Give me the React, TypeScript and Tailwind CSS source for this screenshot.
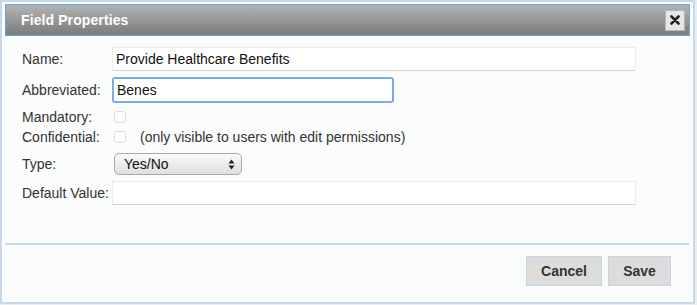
import { useState } from "react";

export default function App() {
  const [name, setName] = useState("Provide Healthcare Benefits");
  const [abbr, setAbbr] = useState("Benes");
  const [defaultValue, setDefaultValue] = useState("");

  return (
    <div className="w-[697px] h-[305px] bg-[#e9eef2] font-['Liberation_Sans',Arial,sans-serif] text-[14px] text-[#333]">
      <div className="w-[695px] h-[304px] border-2 border-[#c6d9e8] bg-[#fbfcfc] px-[3px] pt-[2px] flex flex-col">
        {/* Title bar */}
        <div className="h-[32px] border border-[#65a5de] bg-gradient-to-b from-[#b4b4b4] to-[#7b7b7b] flex items-center justify-between pl-[15px] pr-[4px]">
          <span className="text-white font-bold text-[14px] tracking-[0.1px]">Field Properties</span>
          <button className="w-[20px] h-[21px] bg-[#e6e6e6] border border-[#b5b5b5] flex items-center justify-center">
            <svg width="10" height="10" viewBox="0 0 10 10">
              <path d="M1.5 1.5 L8.5 8.5 M8.5 1.5 L1.5 8.5" stroke="#222" strokeWidth="2.6" strokeLinecap="round" />
            </svg>
          </button>
        </div>

        {/* Body */}
        <div className="h-[207px] pl-[17px] pt-[11px] flex flex-col">
          <div className="flex items-center h-[24px]">
            <label className="w-[90px]">Name:</label>
            <input
              value={name}
              onChange={(e) => setName(e.target.value)}
              className="w-[524px] h-[24px] bg-white border border-[#ebebeb] border-b-[#d6d6d6] px-[3px] outline-none text-[#111]"
            />
          </div>
          <div className="flex items-center h-[26px] mt-[6px]">
            <label className="w-[90px]">Abbreviated:</label>
            <input
              value={abbr}
              onChange={(e) => setAbbr(e.target.value)}
              className="w-[282px] h-[26px] bg-white border-2 border-[#7eaae3] rounded-[3px] px-[3px] outline-none text-[#111]"
            />
          </div>
          <div className="flex items-center h-[20px] mt-[4px]">
            <label className="w-[92px]">Mandatory:</label>
            <span className="w-[12px] h-[12px] border border-[#dcdcdc] rounded-[3px] bg-white" />
          </div>
          <div className="flex items-center h-[20px]">
            <label className="w-[92px]">Confidential:</label>
            <span className="w-[12px] h-[12px] border border-[#dcdcdc] rounded-[3px] bg-white" />
            <span className="ml-[14px]">(only visible to users with edit permissions)</span>
          </div>
          <div className="flex items-center h-[22px] mt-[6px]">
            <label className="w-[92px]">Type:</label>
            <div className="w-[128px] h-[22px] rounded-[5px] border border-[#a9a9a9] bg-gradient-to-b from-[#fbfbfb] to-[#dedede] flex items-center justify-between pl-[9px] pr-[6px] text-[#111]">
              <span>Yes/No</span>
              <svg width="7" height="11" viewBox="0 0 7 11">
                <path d="M3.5 0.5 L6.5 4.5 L0.5 4.5 Z M3.5 10.5 L6.5 6.5 L0.5 6.5 Z" fill="#222" />
              </svg>
            </div>
          </div>
          <div className="flex items-center h-[24px] mt-[6px]">
            <label className="w-[90px]">Default Value:</label>
            <input
              value={defaultValue}
              onChange={(e) => setDefaultValue(e.target.value)}
              className="w-[524px] h-[24px] bg-white border border-[#ebebeb] border-b-[#d6d6d6] px-[3px] outline-none"
            />
          </div>
        </div>

        <div className="h-[2px] bg-[#c4d9ea] mr-[1px]" />

        {/* Footer */}
        <div className="flex justify-end gap-[6px] pt-[11px] pr-[19px]">
          <button className="w-[76px] h-[30px] bg-[#dcdcdc] border border-[#c4d6e6] font-bold text-[#333]">Cancel</button>
          <button className="w-[63px] h-[30px] bg-[#dcdcdc] border border-[#c4d6e6] font-bold text-[#333]">Save</button>
        </div>
      </div>
    </div>
  );
}
